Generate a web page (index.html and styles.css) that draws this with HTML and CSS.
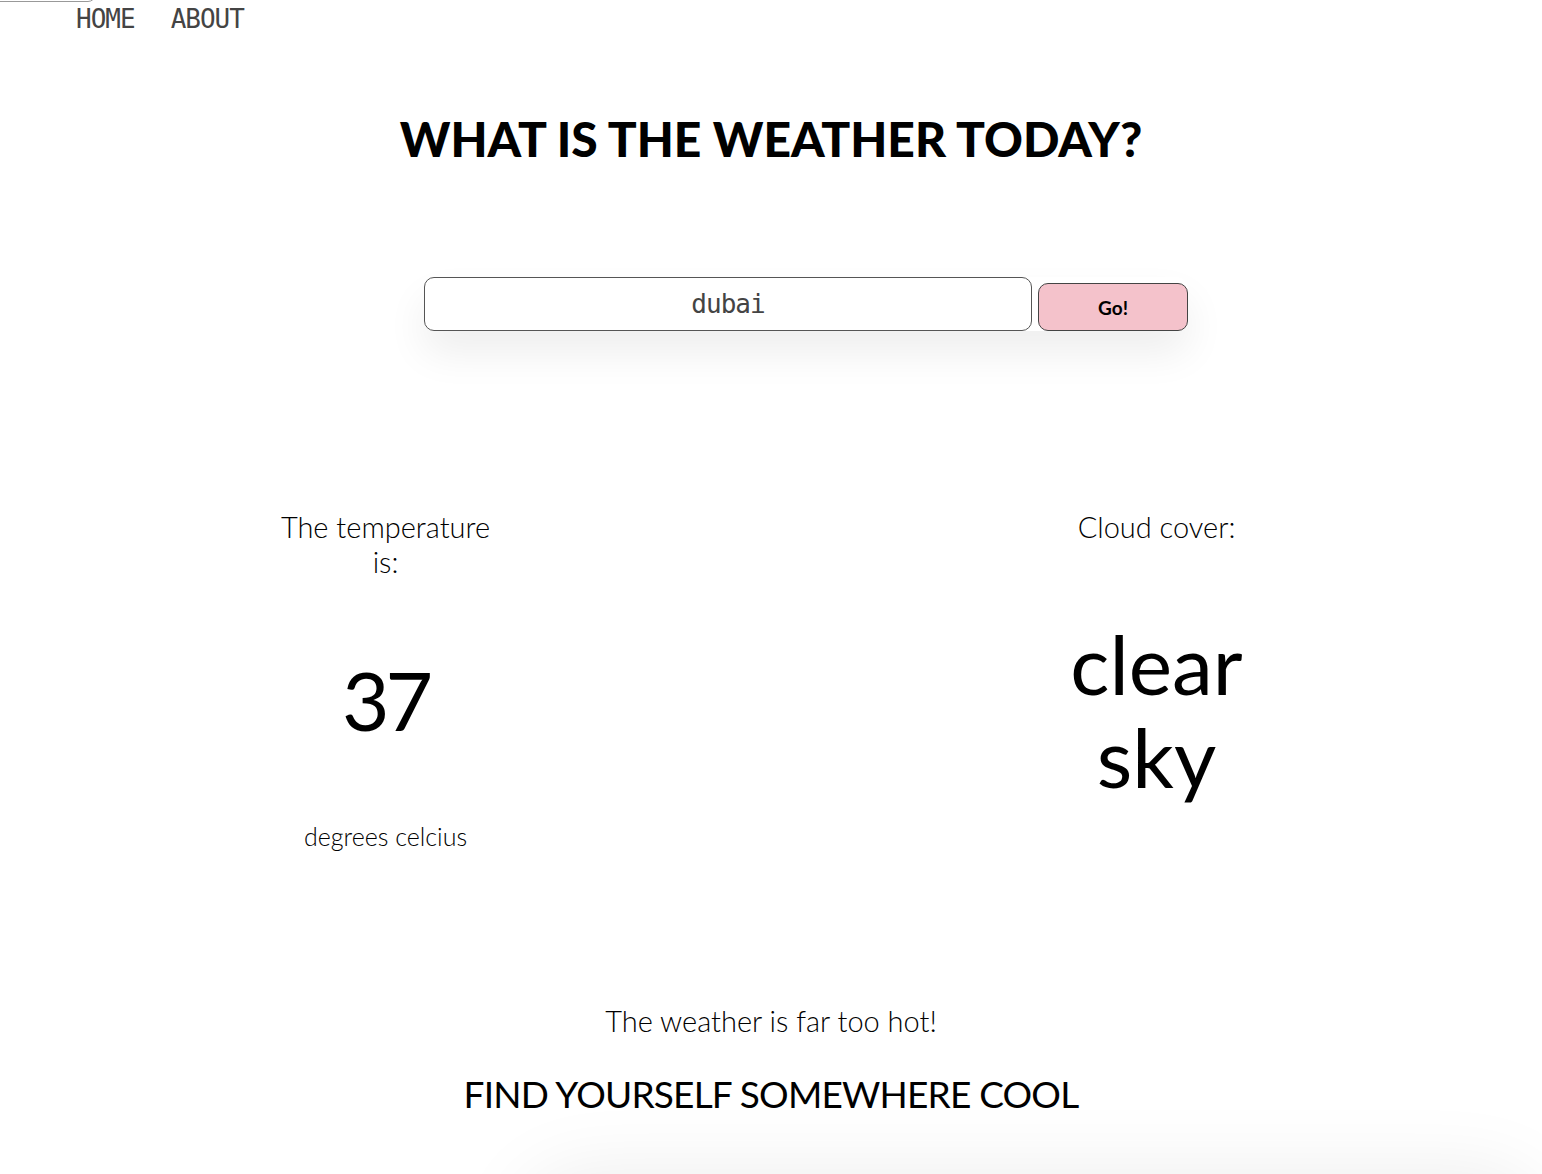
FILE: index.html
```html
<!DOCTYPE html>
<html lang="en">
<head>
<meta charset="utf-8">
<title>Weather</title>
<link rel="stylesheet" href="styles.css">
</head>
<body>
<div class="ghost-box"></div>
<nav class="nav">
  <a class="nav-link" href="#">HOME</a>
  <a class="nav-link" href="#">ABOUT</a>
</nav>
<main class="main">
  <h1 class="title">WHAT IS THE WEATHER TODAY?</h1>
  <form class="search">
    <input class="search-input" type="text" value="dubai">
    <button class="search-btn" type="button">Go!</button>
  </form>
  <section class="results">
    <div class="result">
      <p class="result-label">The temperature is:</p>
      <p class="result-temp">37</p>
      <p class="result-unit">degrees celcius</p>
    </div>
    <div class="result">
      <p class="result-label">Cloud cover:</p>
      <p class="result-cloud">clear sky</p>
    </div>
  </section>
  <p class="verdict">The weather is far too hot!</p>
  <p class="advice">FIND YOURSELF SOMEWHERE COOL</p>
  <div class="footer-shadow"></div>
</main>
</body>
</html>
```
FILE: styles.css
```css
html, body {
  margin: 0;
  padding: 0;
  background: #ffffff;
  color: #000;
  overflow: hidden;
}
body {
  font-family: "Lato", "Noto Sans", sans-serif;
  height: 1174px;
  position: relative;
}
.ghost-box {
  position: absolute;
  left: -10px;
  top: -30px;
  width: 104px;
  height: 30px;
  border: 1px solid #999;
  border-radius: 8px;
}
.nav {
  display: flex;
  gap: 36px;
  padding: 2px 0 0 76px;
  height: 36px;
}
.nav-link {
  font-family: "DejaVu Sans Mono", "Liberation Mono", monospace;
  font-weight: 400;
  font-size: 26px;
  letter-spacing: -1px;
  line-height: 34px;
  color: #444;
  text-decoration: none;
}
.main {
  display: flex;
  flex-direction: column;
  align-items: center;
}
.title {
  font-family: "Lato", sans-serif;
  font-weight: 900;
  font-size: 48px;
  letter-spacing: 0;
  margin: 69px 0 0 0;
  line-height: 64px;
}
.search {
  display: flex;
  align-items: flex-end;
  gap: 6px;
  margin: 106px 0 0 70px;
  box-shadow: 0 22px 40px rgba(0,0,0,0.07);
  border-radius: 12px;
}
.search-input {
  width: 608px;
  height: 54px;
  box-sizing: border-box;
  border: 1px solid #555;
  border-radius: 10px;
  text-align: center;
  font-family: "DejaVu Sans Mono", monospace;
  font-size: 26px;
  letter-spacing: -1px;
  color: #444;
  background: #fff;
  outline: none;
}
.search-btn {
  width: 150px;
  height: 48px;
  box-sizing: border-box;
  background: #f4c2cb;
  border: 1px solid #444;
  border-radius: 10px;
  font-family: "Lato", sans-serif;
  font-weight: 700;
  font-size: 19px;
  color: #000;
}
.results {
  display: flex;
  justify-content: space-around;
  width: 100%;
  margin-top: 178px;
}
.result {
  width: 215px;
  display: flex;
  flex-direction: column;
  align-items: center;
  text-align: center;
}
.result p {
  margin: 0;
}
.result-label {
  font-weight: 300;
  font-size: 29px;
  line-height: 35px;
  width: 215px;
}
.result-temp {
  font-weight: 400;
  font-size: 82px;
  letter-spacing: -4px;
  line-height: 100px;
  margin-top: 70px !important;
}
.result-unit {
  font-weight: 300;
  font-size: 25px;
  line-height: 30px;
  margin-top: 72px !important;
}
.result-cloud {
  font-weight: 400;
  font-size: 82px;
  line-height: 93px;
  margin-top: 73px !important;
  width: 200px;
}
.verdict {
  font-weight: 300;
  font-size: 29px;
  margin: 152px 0 0 0;
  line-height: 35px;
}
.advice {
  font-weight: 400;
  font-size: 37px;
  letter-spacing: -0.8px;
  margin: 32px 0 0 0;
  line-height: 48px;
}
.footer-shadow {
  align-self: flex-end;
  width: 1020px;
  height: 200px;
  margin-top: 56px;
  border-radius: 60px;
  box-shadow: 0 0 80px rgba(0,0,0,0.08);
}
```
